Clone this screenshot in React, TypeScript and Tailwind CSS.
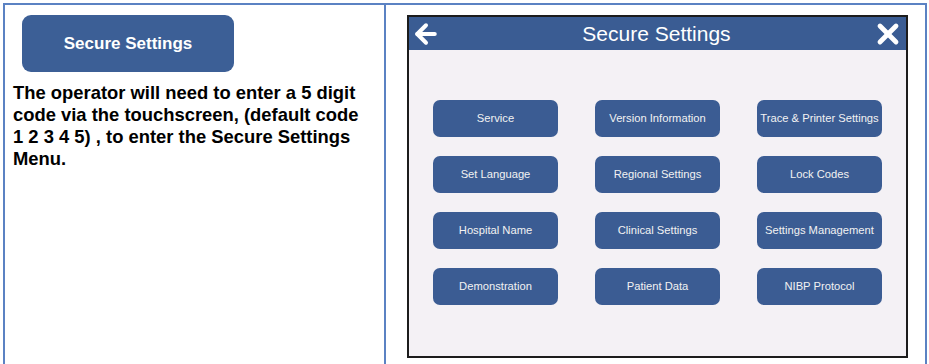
import { ArrowLeft, X } from 'lucide-react';

const items = [
  'Service',
  'Version Information',
  'Trace & Printer Settings',
  'Set Language',
  'Regional Settings',
  'Lock Codes',
  'Hospital Name',
  'Clinical Settings',
  'Settings Management',
  'Demonstration',
  'Patient Data',
  'NIBP Protocol',
];

export default function App() {
  return (
    <div className="h-[364px] w-[929px] overflow-hidden bg-white pl-[3px] pt-[3px] font-['Liberation_Sans',Arial,sans-serif]">
      <div className="flex h-[400px] w-[924px] border-l-2 border-r-2 border-t-2 border-[#5b82c3]">
        {/* left cell */}
        <div className="w-[381px] shrink-0 border-r-2 border-[#5b82c3] pl-[8px] pr-[14px] pt-[10px]">
          <div className="ml-[9px] flex h-[57px] w-[212px] items-center justify-center rounded-[9px] bg-[#3c5f96] text-[17px] font-bold text-white">
            Secure Settings
          </div>
          <p className="mt-[10px] text-[18.4px] font-bold leading-[22px] text-black">
            The operator will need to enter a 5 digit code via the touchscreen, (default code 1 2 3 4 5) , to enter the
            Secure Settings Menu.
          </p>
        </div>

        {/* right cell */}
        <div className="flex-1 pl-[21px] pt-[10px]">
          <div className="flex h-[343px] w-[501px] flex-col border-2 border-[#1c1c1c] bg-[#f4f1f5]">
            <div className="flex h-[33px] shrink-0 items-center justify-between bg-[#3a5c93] px-[2px] text-white">
              <ArrowLeft className="h-[30px] w-[30px]" strokeWidth={3.2} />
              <span className="text-[21px] leading-none">Secure Settings</span>
              <X className="h-[32px] w-[32px]" strokeWidth={3.6} />
            </div>
            <div className="grid grid-cols-[125px_125px_125px] gap-x-[37px] gap-y-[19px] pl-[24px] pt-[50px]">
              {items.map((label) => (
                <div
                  key={label}
                  className="flex h-[37px] items-center justify-center rounded-[7px] bg-[#3b5c93] text-[11.2px] whitespace-nowrap text-[#f2f2f2]"
                >
                  {label}
                </div>
              ))}
            </div>
          </div>
        </div>
      </div>
    </div>
  );
}
